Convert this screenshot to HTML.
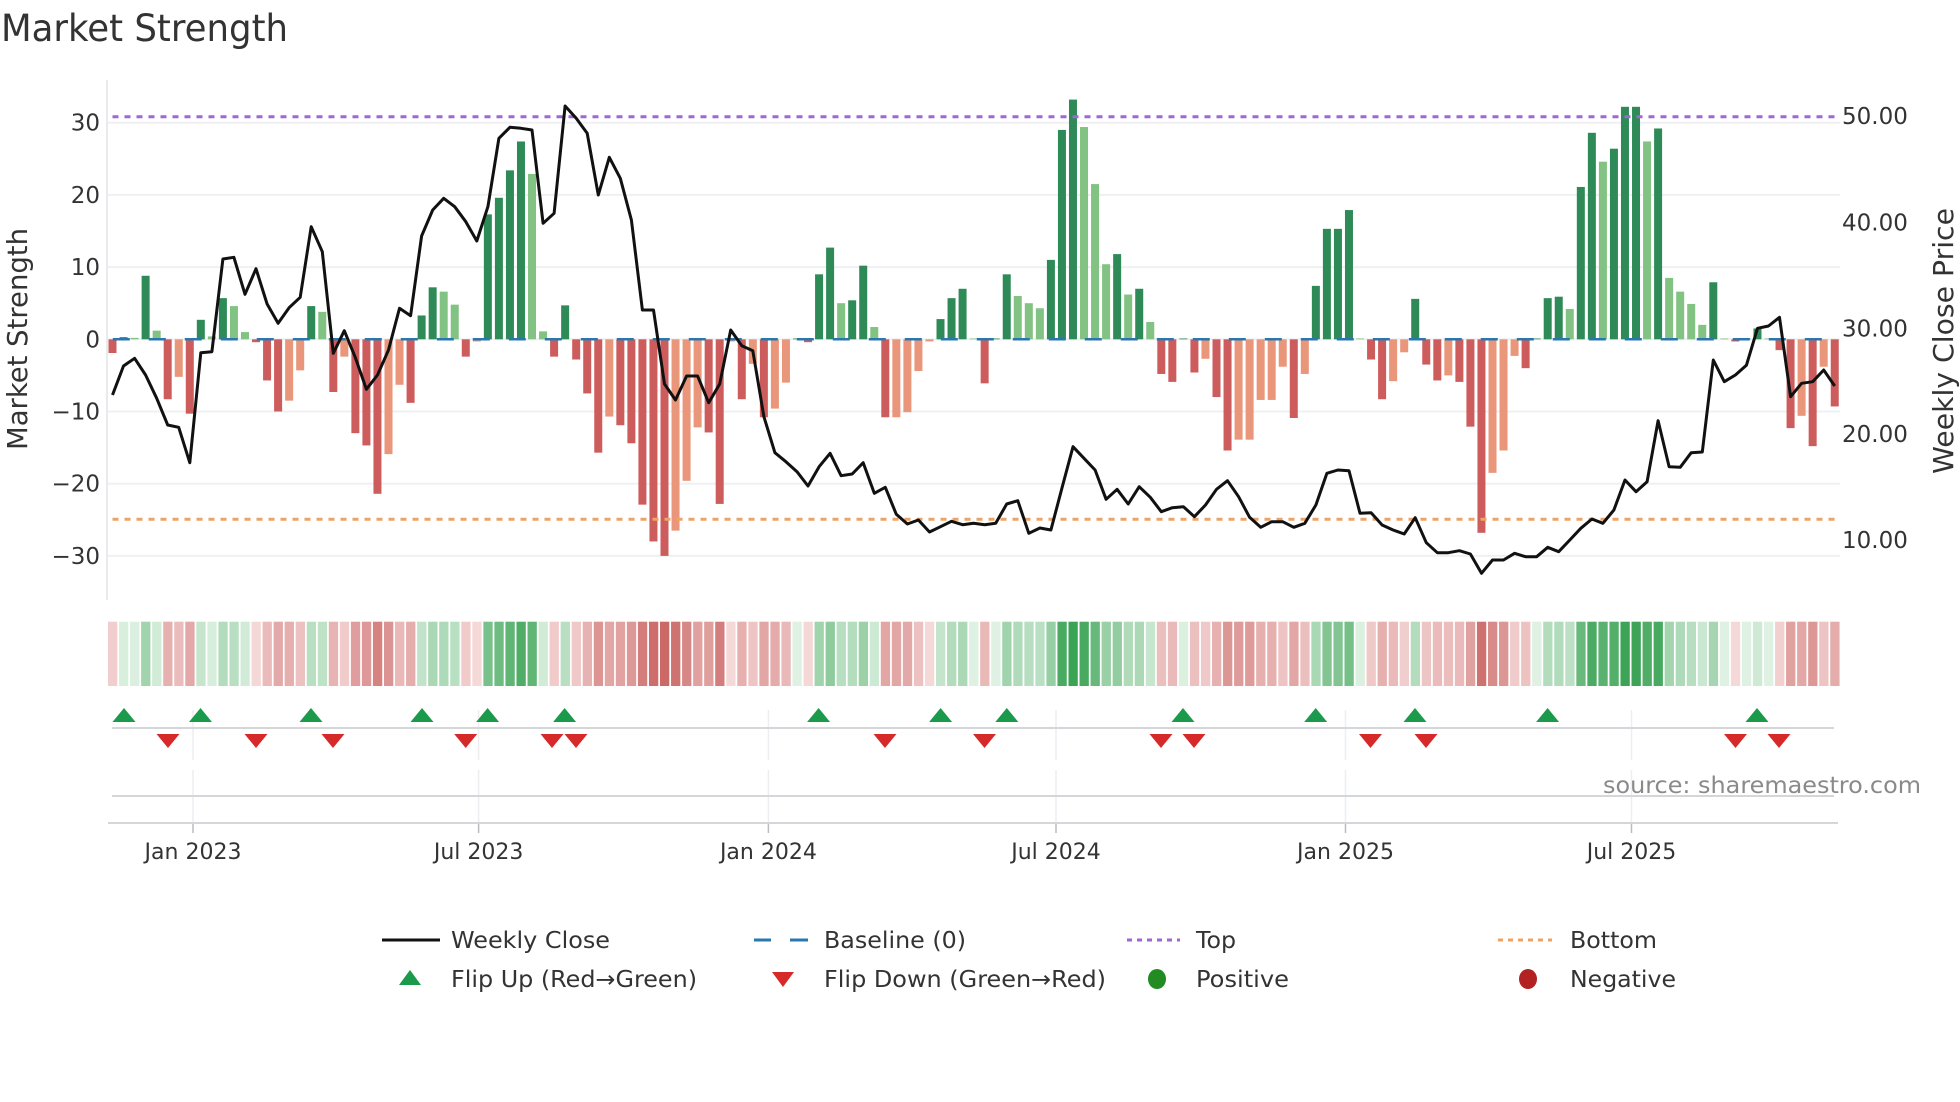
<!DOCTYPE html>
<html><head><meta charset="utf-8">
<style>
html,body{margin:0;padding:0;background:#fff;}
svg{display:block;font-family:"DejaVu Sans","Liberation Sans",sans-serif;}
</style></head>
<body>
<svg id="c" width="1960" height="1102" viewBox="0 0 1960 1102" xmlns="http://www.w3.org/2000/svg">
<rect width="1960" height="1102" fill="#fff"/>
<text x="1" y="41" font-size="37" fill="#333" textLength="287" lengthAdjust="spacingAndGlyphs">Market Strength</text>
<g id="grid"></g>
<line x1="107" y1="80" x2="107" y2="600" stroke="#e8eaee" stroke-width="2"/>
<g id="bars"></g>
<line x1="112.8" y1="339.3" x2="1838" y2="339.3" stroke="#2a77b0" stroke-width="2.5" stroke-dasharray="17 19"/>
<line x1="112.5" y1="116.7" x2="1838" y2="116.7" stroke="#a066d3" stroke-width="3" stroke-dasharray="6 6"/>
<line x1="112.5" y1="519.3" x2="1838" y2="519.3" stroke="#eea263" stroke-width="3" stroke-dasharray="6 6"/>
<polyline id="price" fill="none" stroke="#111" stroke-width="3" stroke-linejoin="round"/>
<g id="ylab" font-size="23" fill="#333" text-anchor="end"></g>
<g id="plab" font-size="23" fill="#333"></g>
<text transform="translate(27,339) rotate(-90)" font-size="28" fill="#333" text-anchor="middle" textLength="222" lengthAdjust="spacingAndGlyphs">Market Strength</text>
<text transform="translate(1953,341) rotate(-90)" font-size="28" fill="#333" text-anchor="middle" textLength="266" lengthAdjust="spacingAndGlyphs">Weekly Close Price</text>
<g id="strip"></g>
<g id="vgrid"></g>
<line x1="112" y1="728" x2="1834" y2="728" stroke="#d4d6da" stroke-width="2"/>
<line x1="112" y1="796" x2="1834" y2="796" stroke="#d4d6da" stroke-width="2"/>
<line x1="108" y1="823" x2="1838" y2="823" stroke="#d4d6da" stroke-width="2"/>
<g id="marks"></g>
<g id="xlab" font-size="22" fill="#333" text-anchor="middle"></g>
<text x="1921" y="793" font-size="23" fill="#8a8a8a" text-anchor="end" textLength="318" lengthAdjust="spacingAndGlyphs">source: sharemaestro.com</text>
<g font-size="23" fill="#333">
<line x1="382" y1="940" x2="440" y2="940" stroke="#111" stroke-width="3"/>
<text x="451" y="948" textLength="159" lengthAdjust="spacingAndGlyphs">Weekly Close</text>
<line x1="754" y1="940" x2="808" y2="940" stroke="#2a77b0" stroke-width="3" stroke-dasharray="17 19"/>
<line x1="754" y1="940" x2="808" y2="940" stroke="#2a77b0" stroke-width="3" stroke-dasharray="0 36 18 0"/>
<text x="824" y="948" textLength="142" lengthAdjust="spacingAndGlyphs">Baseline (0)</text>
<line x1="1127" y1="940" x2="1180" y2="940" stroke="#a066d3" stroke-width="3" stroke-dasharray="5 5"/>
<text x="1196" y="948" textLength="40" lengthAdjust="spacingAndGlyphs">Top</text>
<line x1="1498" y1="940" x2="1552" y2="940" stroke="#eea263" stroke-width="3" stroke-dasharray="5 5"/>
<text x="1570" y="948" textLength="87" lengthAdjust="spacingAndGlyphs">Bottom</text>
<polygon points="410,970 399,985 421,985" fill="#1b9a4b"/>
<text x="451" y="987" textLength="246" lengthAdjust="spacingAndGlyphs">Flip Up (Red→Green)</text>
<polygon points="772,972 794,972 783,987" fill="#d62a2a"/>
<text x="824" y="987" textLength="282" lengthAdjust="spacingAndGlyphs">Flip Down (Green→Red)</text>
<ellipse cx="1157" cy="979" rx="9" ry="10" fill="#228b22"/>
<text x="1196" y="987" textLength="93" lengthAdjust="spacingAndGlyphs">Positive</text>
<ellipse cx="1528" cy="979" rx="9" ry="10" fill="#b22222"/>
<text x="1570" y="987" textLength="106" lengthAdjust="spacingAndGlyphs">Negative</text>
</g>
</svg>
<script>
var NS="http://www.w3.org/2000/svg";
function el(p,t,a,txt){var e=document.createElementNS(NS,t);for(var k in a)e.setAttribute(k,a[k]);if(txt!=null)e.textContent=txt;document.getElementById(p).appendChild(e);return e;}
var v=[-1.9,0.3,0.2,8.8,1.2,-8.3,-5.2,-10.3,2.7,0.4,5.7,4.6,1.0,-0.4,-5.7,-10,-8.5,-4.3,4.6,3.8,-7.3,-2.4,-13,-14.7,-21.4,-15.9,-6.3,-8.8,3.3,7.2,6.6,4.8,-2.4,-0.3,17.3,19.6,23.4,27.4,22.9,1.1,-2.4,4.7,-2.8,-7.5,-15.7,-10.7,-11.9,-14.4,-22.9,-28,-30,-26.5,-19.6,-12.2,-12.9,-22.8,-0.3,-8.3,-3.4,-10.8,-9.6,-6.0,0,
-0.4,9.0,12.7,5.0,5.4,10.2,1.7,-10.8,-10.8,-10.1,-4.4,-0.3,2.8,5.7,7.0,0,-6.1,0,9.0,6.0,5.0,4.3,11.0,29,33.2,29.4,21.5,10.4,11.8,6.2,7.0,2.4,-4.8,-5.9,0.1,-4.6,-2.7,-8.0,-15.4,-13.9,-13.9,-8.4,-8.4,-3.8,-10.9,-4.8,7.4,15.3,15.3,17.9,0.1,
-2.8,-8.3,-5.8,-1.8,5.6,-3.5,-5.7,-5.0,-5.9,-12.1,-26.8,-18.5,-15.4,-2.3,-4.0,0,5.7,5.9,4.2,21.1,28.6,24.6,26.4,32.2,32.2,27.4,29.2,8.5,6.6,4.9,2.0,7.9,0,-0.3,0,1.5,0,-1.5,-12.3,-10.6,-14.8,-3.8,-9.3];
var py=[945,858,835,885,955,1035,1042,1148,818,815,537,532,643,566,672,730,683,652,440,515,820,752,833,928,885,810,685,707,468,390,355,380,425,483,380,175,142,145,150,430,400,78,115,160,345,232,295,420,690,690,912,960,888,888,968,912,750,797,812,1010,1118,1145,1175,
1218,1160,1120,1187,1182,1148,1240,1222,1303,1332,1320,1356,1340,1324,1334,1330,1334,1330,1272,1262,1360,1344,1350,1225,1100,1135,1170,1258,1228,1272,1220,1252,1295,1283,1280,1310,1275,1228,1202,1250,1312,1342,1325,1325,1342,1330,1275,1180,1170,1172,
1300,1298,1335,1350,1362,1313,1388,1418,1418,1412,1422,1480,1440,1440,1420,1430,1430,1402,1415,1380,1345,1317,1330,1290,1200,1235,1205,1022,1160,1162,1118,1116,840,905,885,856,745,738,712,950,910,905,870,918];
var Z=339.3,S=7.22;
function X(i){return 112.5+11.04*i;}
[30,20,10,0,-10,-20,-30].forEach(function(t){var y=Z-t*S;el("grid","line",{x1:108,y1:y,x2:1840,y2:y,stroke:"#eef0f4","stroke-width":2});
el("ylab","text",{x:100,y:y+8},(t<0?"\u2212":"")+Math.abs(t));});
[[50,116],[40,222.7],[30,328.3],[20,434],[10,540]].forEach(function(p){el("plab","text",{x:1842,y:p[1]+8},p[0].toFixed(2));});
var pts=[];
for(var i=0;i<v.length;i++){var x=X(i),a=v[i],p=i?v[i-1]:0,c;
if(a>=0){c=(a>=p)?"#2e8b57":"#82c282";}else{c=(a<p)?"#cd5c5c":"#e9967a";}
var h=Math.max(Math.abs(a)*S,0.8);
el("bars","rect",{x:x-4,y:a>=0?Z-h:Z,width:8,height:h,fill:c});
pts.push(x.toFixed(1)+","+(80+py[i]/3).toFixed(1));
var t=Math.pow(Math.min(1,Math.abs(a)/33),0.75),col;
if(a>=0){col=[222+(58-222)*t,241+(163-241)*t,226+(84-226)*t];}else{col=[246+(200-246)*t,220+(96-220)*t,220+(93-220)*t];}
el("strip","rect",{x:108+11.04*i,y:621.7,width:9.3,height:64.3,fill:"rgb("+col.map(Math.round).join(",")+")"});
}
document.getElementById("price").setAttribute("points",pts.join(" "));
[["Jan 2023",193],["Jul 2023",478.6],["Jan 2024",768.4],["Jul 2024",1056],["Jan 2025",1345.5],["Jul 2025",1631.5]].forEach(function(d){
el("vgrid","line",{x1:d[1],y1:710,x2:d[1],y2:760,stroke:"#eceef2","stroke-width":1.5});
el("vgrid","line",{x1:d[1],y1:770,x2:d[1],y2:823,stroke:"#eceef2","stroke-width":1.5});
el("vgrid","line",{x1:d[1],y1:823,x2:d[1],y2:833,stroke:"#bbb","stroke-width":1.5});
el("xlab","text",{x:d[1],y:859},d[0]);});
[124,200.5,311,422,487.6,564.6,818.6,940.6,1006.8,1183,1315.7,1415,1547.6,1757].forEach(function(x){el("marks","polygon",{points:x+",708 "+(x-11.5)+",722 "+(x+11.5)+",722",fill:"#1b9a4b"});});
[168,256,333,465.7,552,576,885,984.5,1161,1194,1370.5,1426,1735.5,1779].forEach(function(x){el("marks","polygon",{points:(x-11.5)+",734 "+(x+11.5)+",734 "+x+",748",fill:"#d62a2a"});});
</script>
</body></html>
